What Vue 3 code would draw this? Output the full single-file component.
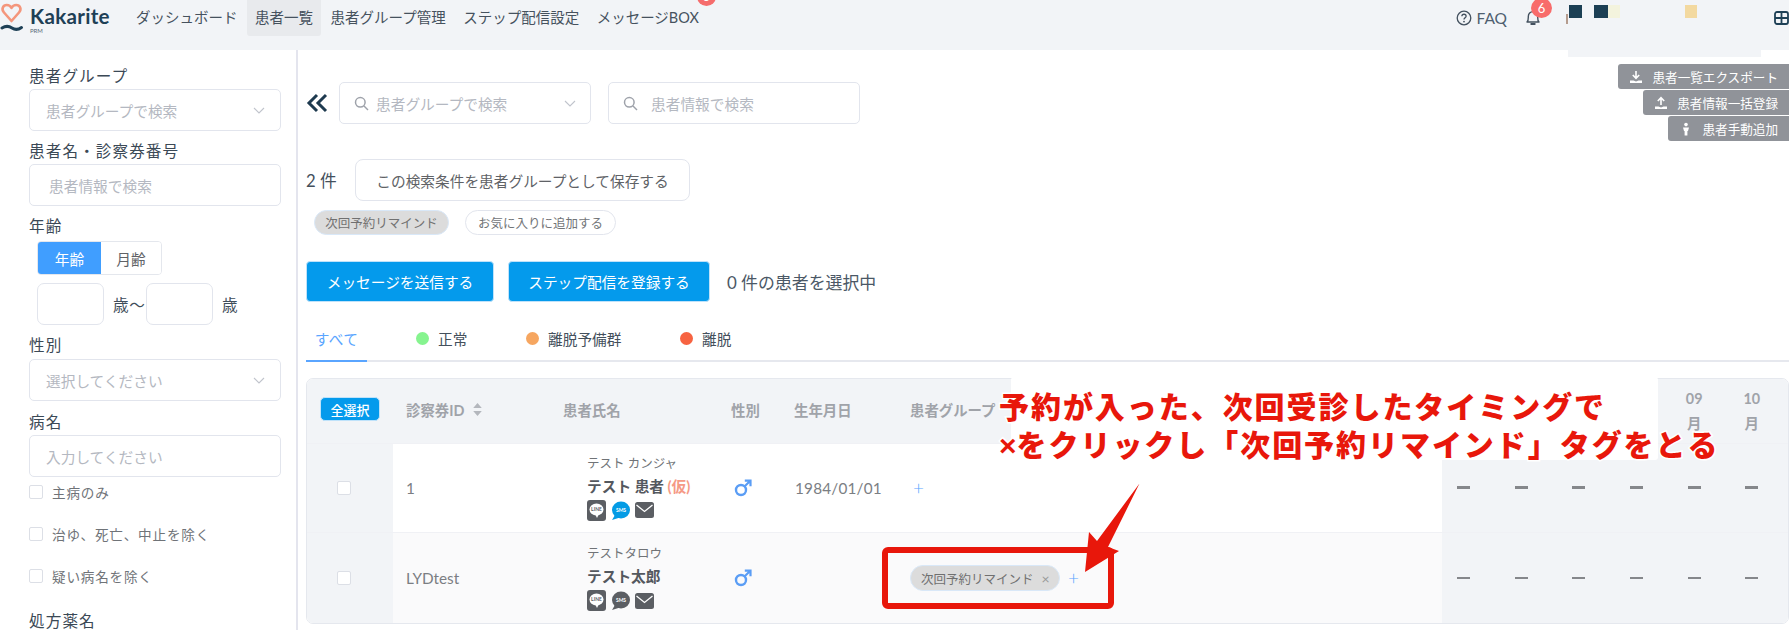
<script setup>
const navItems = [
  { label: 'ダッシュボード' },
  { label: '患者一覧', active: true },
  { label: '患者グループ管理' },
  { label: 'ステップ配信設定' },
  { label: 'メッセージBOX', badge: true },
]
const tabs = [
  { label: '正常', color: '#86f48f', width: 'w1' },
  { label: '離脱予備群', color: '#f6a660', width: 'w2' },
  { label: '離脱', color: '#f76341', width: 'w3' },
]
const checks = ['主病のみ', '治ゆ、死亡、中止を除く', '疑い病名を除く']
const months = [1, 2, 3, 4, 5, 6]
const rows = [
  { id: '1', kana: 'テスト カンジャ', name: 'テスト 患者', temp: true, date: '1984/01/01', tag: false, sms: true, cls: 'r1' },
  { id: 'LYDtest', kana: 'テストタロウ', name: 'テスト太郎', temp: false, date: '', tag: true, sms: false, cls: 'r2' },
]
</script>

<template>
  <div class="page">
    <header class="header">
      <div class="logo">
        <svg class="logo-mark" width="24" height="34" viewBox="0 0 24 34">
          <path d="M11.5 21 L4 12.5 C1 9 3 5 6.8 5 C9 5 10.6 6.2 11.5 8 C12.4 6.2 14 5 16.2 5 C20 5 22 9 19 12.5 Z" fill="none" stroke="#f4967c" stroke-width="2.6" stroke-linejoin="round"/>
          <path d="M2 28 C6 25.5 9 26 12 28 C15 30 18 30 21.5 27.5" fill="none" stroke="#1e4056" stroke-width="3" stroke-linecap="round"/>
        </svg>
        <div class="logo-text">
          <span class="logo-name">Kakarite</span>
          <span class="logo-sub">PRM</span>
        </div>
      </div>
      <nav class="nav">
        <a v-for="n in navItems" :key="n.label" class="nav-item" :class="{ active: n.active }">
          {{ n.label }}
          <span v-if="n.badge" class="nav-badge">6</span>
        </a>
      </nav>
      <div class="head-right">
        <svg width="16" height="16" viewBox="0 0 16 16">
          <circle cx="8" cy="8" r="6.8" fill="none" stroke="#44515f" stroke-width="1.3"/>
          <path d="M5.9 6.2 C5.9 3.6 10.1 3.6 10.1 6.2 C10.1 7.8 8 7.8 8 9.6" fill="none" stroke="#44515f" stroke-width="1.3"/>
          <circle cx="8" cy="11.6" r=".9" fill="#44515f"/>
        </svg>
        <span class="faq">FAQ</span>
        <span class="bell">
          <svg width="16" height="18" viewBox="0 0 16 18">
            <path d="M2 13 C3.5 11.5 3.3 9.5 3.3 7.5 C3.3 4.6 5.3 2.6 8 2.6 C10.7 2.6 12.7 4.6 12.7 7.5 C12.7 9.5 12.5 11.5 14 13 Z" fill="none" stroke="#44515f" stroke-width="1.4" stroke-linejoin="round"/>
            <path d="M6.2 15 H9.8" stroke="#44515f" stroke-width="1.8" stroke-linecap="round"/>
          </svg>
          <span class="bell-badge">6</span>
        </span>
        <span class="head-spacer"></span>
        <svg class="apps" width="15" height="14" viewBox="0 0 15 14">
          <rect x="1" y="1" width="13" height="12" rx="2" fill="none" stroke="#1e4056" stroke-width="1.8"/>
          <path d="M7.5 1 V13 M1 7 H14" stroke="#1e4056" stroke-width="1.8"/>
        </svg>
      </div>
    </header>

    <div class="body">
      <aside class="side">
        <div class="field">
          <div class="label">患者グループ</div>
          <div class="box select"><span class="ph">患者グループで検索</span><svg width="12" height="7" viewBox="0 0 12 7"><path d="M1 1 L6 6 L11 1" fill="none" stroke="#c0c4cc" stroke-width="1.1"/></svg></div>
        </div>
        <div class="field">
          <div class="label">患者名・診察券番号</div>
          <div class="box input-ph wide-pad"><span class="ph">患者情報で検索</span></div>
        </div>
        <div class="field age">
          <div class="label">年齢</div>
          <div class="seg"><span class="seg-on">年齢</span><span class="seg-off">月齢</span></div>
          <div class="range">
            <span class="mini"></span><span class="unit first">歳〜</span><span class="mini"></span><span class="unit">歳</span>
          </div>
        </div>
        <div class="field sex">
          <div class="label">性別</div>
          <div class="box select"><span class="ph">選択してください</span><svg width="12" height="7" viewBox="0 0 12 7"><path d="M1 1 L6 6 L11 1" fill="none" stroke="#c0c4cc" stroke-width="1.1"/></svg></div>
        </div>
        <div class="field last">
          <div class="label">病名</div>
          <div class="box input-ph"><span class="ph">入力してください</span></div>
        </div>
        <label v-for="c in checks" :key="c" class="check"><span class="cb"></span>{{ c }}</label>
        <div class="label drug">処方薬名</div>
      </aside>

      <main class="main">
        <div class="top">
          <div class="search-row">
            <svg class="dbl" width="23" height="20" viewBox="0 0 23 20"><path d="M11 2 L3 10 L11 18 M20 2 L12 10 L20 18" fill="none" stroke="#1e3a4f" stroke-width="3"/></svg>
            <div class="box s-select">
              <svg width="15" height="15" viewBox="0 0 15 15"><circle cx="6.3" cy="6.3" r="4.8" fill="none" stroke="#9ea2aa" stroke-width="1.5"/><path d="M10 10 L14 14" stroke="#9ea2aa" stroke-width="1.5"/></svg>
              <span class="ph grow">患者グループで検索</span>
              <svg width="12" height="7" viewBox="0 0 12 7"><path d="M1 1 L6 6 L11 1" fill="none" stroke="#c0c4cc" stroke-width="1.1"/></svg>
            </div>
            <div class="box s-input">
              <svg width="15" height="15" viewBox="0 0 15 15"><circle cx="6.3" cy="6.3" r="4.8" fill="none" stroke="#9ea2aa" stroke-width="1.5"/><path d="M10 10 L14 14" stroke="#9ea2aa" stroke-width="1.5"/></svg>
              <span class="ph">患者情報で検索</span>
            </div>
          </div>
          <div class="exports">
            <button class="exp">
              <svg width="14" height="14" viewBox="0 0 14 14"><path d="M7 1 V8 M3.8 5 L7 8.4 L10.2 5" fill="none" stroke="#fff" stroke-width="1.6"/><path d="M1 10.5 H4.5 L7 11.5 L9.5 10.5 H13 V13 H1 Z" fill="#fff"/></svg>
              患者一覧エクスポート
            </button>
            <button class="exp">
              <svg width="14" height="14" viewBox="0 0 14 14"><path d="M7 9 V2 M3.8 5 L7 1.6 L10.2 5" fill="none" stroke="#fff" stroke-width="1.6"/><path d="M1 10.5 H4.5 L7 11.5 L9.5 10.5 H13 V13 H1 Z" fill="#fff"/></svg>
              患者情報一括登録
            </button>
            <button class="exp">
              <svg width="14" height="14" viewBox="0 0 14 14"><circle cx="7" cy="2.6" r="1.8" fill="#fff"/><path d="M4 5.4 H10 L9 9 H8.4 V13.6 H5.6 V9 H5 Z" fill="#fff"/></svg>
              患者手動追加
            </button>
          </div>
        </div>

        <div class="count-row">
          <span class="count">2 件</span>
          <button class="save">この検索条件を患者グループとして保存する</button>
        </div>
        <div class="chips">
          <span class="chip grey">次回予約リマインド</span>
          <span class="chip outline">お気に入りに追加する</span>
        </div>
        <div class="actions">
          <button class="primary b1">メッセージを送信する</button>
          <button class="primary b2">ステップ配信を登録する</button>
          <span class="selected">0 件の患者を選択中</span>
        </div>

        <div class="tabs">
          <span class="tab on">すべて</span>
          <span v-for="t in tabs" :key="t.label" class="tab" :class="t.width">
            <i class="dot" :style="{ background: t.color }"></i>{{ t.label }}
          </span>
        </div>

        <section class="table">
          <div class="grid thead">
            <div class="c-check"><button class="all">全選択</button></div>
            <div class="c-id">診察券ID
              <svg width="11" height="15" viewBox="0 0 10 14"><path d="M5 1 L9 5.5 H1 Z M5 13 L9 8.5 H1 Z" fill="#b4b7bd"/></svg>
            </div>
            <div class="c-name head-name">患者氏名</div>
            <div class="c-gender">性別</div>
            <div class="c-date">生年月日</div>
            <div class="c-group">患者グループ</div>
            <div class="c-months">
              <div class="months">
                <span></span><span></span><span></span><span></span>
                <span class="m">09<br>月</span><span class="m">10<br>月</span>
              </div>
            </div>
          </div>

          <div v-for="r in rows" :key="r.id" class="grid trow" :class="r.cls">
            <div class="c-check grey"><span class="cb"></span></div>
            <div class="c-id cell">{{ r.id }}</div>
            <div class="c-name name-cell">
              <div class="kana">{{ r.kana }}</div>
              <div class="pname">{{ r.name }}<span v-if="r.temp" class="temp"> (仮)</span></div>
              <div class="contact">
                <svg width="19" height="21" viewBox="0 0 19 21"><rect width="19" height="21" rx="3" fill="#5b5e63"/><ellipse cx="9.5" cy="9.5" rx="7" ry="6" fill="#fff"/><path d="M8 14 L10 18 L12 14 Z" fill="#fff"/><text x="9.5" y="11.3" class="ico-t" fill="#5b5e63">LINE</text></svg>
                <svg width="19" height="19" viewBox="0 0 19 19"><ellipse cx="10" cy="9" rx="9" ry="8.4" :fill="r.sms ? '#039be5' : '#5b5e63'"/><path d="M4 14 L1 19 L9 16.5 Z" :fill="r.sms ? '#039be5' : '#5b5e63'"/><text x="10" y="11" class="ico-t" fill="#fff">SMS</text></svg>
                <svg width="19" height="16" viewBox="0 0 19 16"><rect width="19" height="16" rx="2.5" fill="#5b5e63"/><path d="M1.5 3 L9.5 9.5 L17.5 3" fill="none" stroke="#fff" stroke-width="1.3"/></svg>
              </div>
            </div>
            <div class="c-gender">
              <svg class="mars" width="18" height="18" viewBox="0 0 18 18"><circle cx="7" cy="11" r="5" fill="none" stroke="#5a9df5" stroke-width="2.4"/><path d="M10.5 7.5 L16 2 M10.8 1.6 H16.5 V7.2" fill="none" stroke="#5a9df5" stroke-width="2.2"/></svg>
            </div>
            <div class="c-date cell">{{ r.date }}</div>
            <div class="c-group group-cell">
              <span v-if="r.tag" class="chip grey tag">次回予約リマインド<em>×</em></span>
              <span class="plus">+</span>
            </div>
            <div class="c-months grey">
              <div class="months"><span v-for="m in months" :key="m" class="dash"></span></div>
            </div>
          </div>
        </section>
      </main>
    </div>

    <!-- redaction patches lying over the screenshot -->
    <div class="patch-top"></div>
    <i class="blk tick"></i>
    <i class="blk navy b-a"></i>
    <i class="blk navy b-b"></i>
    <i class="blk cream"></i>
    <i class="blk tan"></i>
    <div class="patch-table"></div>

    <!-- red annotation lying over the screenshot -->
    <div class="note">
      <p>予約が入った、次回受診したタイミングで</p>
      <p><span class="x">×</span>をクリックし「次回予約リマインド」タグをとる</p>
    </div>
    <div class="red-box"></div>
    <svg class="arrow" width="70" height="100" viewBox="1080 480 70 100">
      <polygon points="1139.5,483.5 1108,547 1119,551 1085,572 1089,532 1097,541" fill="#e8170b"/>
    </svg>
  </div>
</template>

<style>
html, body { margin: 0; background: #fff; overflow: hidden; }
</style>

<style scoped>
.page {
  position: relative;
  width: 1789px;
  height: 630px;
  overflow: hidden;
  font-family: Lato, "Noto Sans CJK JP", sans-serif;
  font-size: 14.7px;
  color: #44505c;
}
button { font-family: inherit; cursor: pointer; }

/* header */
.header { display: flex; align-items: flex-start; height: 50px; background: #f2f4f7; }
.logo { display: flex; width: 128px; flex: none; }
.logo-mark { flex: none; margin-right: 6px; }
.logo-text { display: flex; flex-direction: column; padding-top: 3px; }
.logo-name { font-family: Lato, sans-serif; font-weight: 700; font-size: 20.6px; line-height: 26px; color: #1e4056; letter-spacing: .3px; }
.logo-sub { font-size: 6px; line-height: 6px; color: #5b6b78; margin-top: -1px; }
.nav { display: flex; gap: 1.5px; font-size: 14.5px; }
.nav-item { position: relative; display: block; height: 36px; line-height: 35px; padding: 0 8px; border-radius: 0 0 3px 3px; color: #46525e; white-space: nowrap; }
.nav-item.active { background: #e8eaed; }
.nav-badge { position: absolute; right: -9px; top: -13px; width: 19px; height: 19px; border-radius: 50%; background: #f56c6c; color: #fff; font-size: 13px; line-height: 19px; text-align: center; }
.head-right { margin-left: auto; display: flex; align-items: center; height: 36px; }
.faq { margin-left: 5px; color: #4f5f70; font-size: 15.5px; }
.bell { position: relative; display: flex; margin-left: 18px; }
.bell-badge { position: absolute; left: 6px; top: -11px; width: 21px; height: 20px; border-radius: 50%; background: #f86c6b; color: #fff; font-size: 13px; line-height: 20px; text-align: center; }
.head-spacer { width: 233px; }
.apps { flex: none; }

/* body */
.body { display: flex; height: 580px; }
.side { width: 267px; flex: none; padding: 16px 0 0 29px; border-right: 2px solid #e4e5ee; }
.label { font-size: 15.6px; line-height: 20px; letter-spacing: 1.1px; color: #3b4956; margin-bottom: 3px; white-space: nowrap; }
.field { margin-bottom: 10px; width: 252px; }
.field.sex { margin-bottom: 11px; }
.field.sex .label { margin-bottom: 4px; }
.field.last { margin-bottom: 8px; }
.box { box-sizing: border-box; display: flex; align-items: center; height: 42px; background: #fff; border: 1px solid #e2e5ed; border-radius: 5px; }
.select { justify-content: space-between; padding: 0 15px 0 16px; }
.input-ph { padding: 0 16px; }
.wide-pad { padding: 0 19px; }
.ph { color: #b4b8c1; white-space: nowrap; }
.age .label { margin-bottom: 5px; }
.seg { display: flex; width: 125px; height: 34px; margin-left: 8px; box-sizing: border-box; border: 1px solid #e4e7ed; border-radius: 4px; overflow: hidden; }
.seg span { display: flex; align-items: center; justify-content: center; }
.seg-on { width: 63px; background: #409eff; color: #fff; }
.seg-off { flex: 1; background: #fff; color: #606266; }
.range { display: flex; align-items: center; margin: 8px 0 0 8px; }
.mini { box-sizing: border-box; width: 67px; height: 42px; border: 1px solid #e2e5ed; border-radius: 7px; }
.unit { font-size: 15.6px; color: #3f4d5a; margin-left: 9px; white-space: nowrap; }
.unit.first { width: 33px; letter-spacing: .6px; }
.check { display: flex; align-items: center; height: 14px; margin-bottom: 28px; font-size: 13.6px; letter-spacing: .8px; color: #6f7378; white-space: nowrap; }
.cb { box-sizing: border-box; display: block; width: 14px; height: 14px; background: #fff; border: 1px solid #dcdfe6; border-radius: 2px; flex: none; }
.check .cb { margin-right: 9px; }
.drug { margin-top: 10px; }

/* main */
.main { flex: 1; min-width: 0; padding-left: 8px; }
.top { display: flex; justify-content: space-between; align-items: flex-start; height: 109px; }
.search-row { display: flex; align-items: center; margin-top: 32px; }
.dbl { flex: none; margin-right: 10px; }
.s-select { width: 252px; padding: 0 14px; gap: 7px; }
.s-input { width: 252px; margin-left: 17px; padding: 0 14px; gap: 13px; }
.grow { flex: 1; }
.exports { display: flex; flex-direction: column; align-items: flex-end; gap: 1px; margin-top: 14px; }
.exp { display: flex; align-items: center; gap: 9px; height: 25px; padding: 0 11px 0 11px; border: 0; border-radius: 3px 0 0 3px; background: #909399; color: #fff; font-size: 12.6px; white-space: nowrap; }
.count-row { display: flex; align-items: center; }
.count { width: 49px; font-size: 16.7px; color: #44505c; }
.save { box-sizing: border-box; width: 335px; height: 42px; padding: 0; background: #fff; border: 1px solid #e2e5ed; border-radius: 8px; color: #606266; font-size: 14.7px; }
.chips { display: flex; margin: 9px 0 0 8px; gap: 16px; }
.chip { box-sizing: border-box; display: inline-flex; align-items: center; justify-content: center; height: 24.5px; border-radius: 13px; font-size: 12.5px; white-space: nowrap; }
.chip.grey { width: 135px; background: #dcdcdc; border: 1px solid #d9e8f8; color: #707070; }
.chip.outline { width: 151px; background: #fff; border: 1px solid #e2e5ed; color: #727578; }
.actions { display: flex; align-items: center; margin-top: 26px; }
.primary { box-sizing: border-box; height: 41px; padding: 0; background: #049aec; border: 1px solid #bfe2fa; border-radius: 4px; color: #fff; font-size: 14.7px; }
.b1 { width: 188px; }
.b2 { width: 202px; margin-left: 14px; }
.selected { margin-left: 17px; font-size: 16.9px; color: #4b5866; }

.tabs { display: flex; margin-top: 19px; height: 39px; border-bottom: 2px solid #e6e8ee; }
.tab { position: relative; display: flex; align-items: center; height: 36px; padding-bottom: 3px; color: #44505c; white-space: nowrap; }
.tab.on { width: 61px; justify-content: center; color: #5aa5ff; letter-spacing: .4px; }
.tab.on::after { content: ""; position: absolute; left: 0; right: 0; bottom: -2px; height: 2px; background: #5aa5ff; }
.w1 { margin-left: 49px; width: 110px; }
.w2 { width: 154px; }
.w3 { width: 60px; }
.dot { display: block; width: 13px; height: 13px; border-radius: 50%; margin-right: 9px; }

/* table */
.table { box-sizing: border-box; width: 1483px; height: 246px; margin-top: 16px; border: 1px solid #e5e8ee; border-radius: 7px; overflow: hidden; }
.grid { display: grid; grid-template-columns: 86px 157px 172px 63px 113px 544px 346px; }
.thead { height: 64px; background: #f2f4f7; font-weight: 700; font-size: 14.4px; color: #a0a3a9; align-items: center; }
.thead > div { padding-bottom: 3px; }
.c-check { display: flex; align-items: center; justify-content: center; }
.all { width: 60px; height: 24.5px; padding: 0; background: #049aec; border: 1px solid #bfe2fa; border-radius: 5px; color: #fff; font-size: 13px; font-weight: 500; }
.thead .c-id { padding-left: 13px; display: flex; align-items: center; gap: 8px; }
.head-name { padding-left: 13px; }
.thead .c-gender { padding-left: 9px; }
.thead .c-date { padding-left: 9px; }
.thead .c-group { padding-left: 12px; }
.thead .c-months { align-self: stretch; padding-bottom: 0; }
.months { display: grid; grid-template-columns: repeat(6, 57.6px); margin-left: -7px; justify-items: center; align-items: center; height: 100%; }
.m { font-size: 14.4px; line-height: 25px; font-weight: 700; color: #a0a3a9; text-align: center; }
.trow { background: #fff; border-top: 1px solid #f0f1f5; }
.r1 { height: 88px; }
.r2 { height: 91px; background: #fafafb; }
.trow > div { display: flex; align-items: center; }
.grey { background: #f2f4f7; }
.trow .c-check { padding-right: 13px; box-sizing: border-box; }
.cell { padding-left: 13px; color: #7b7e83; font-size: 15.3px; }
.c-date.cell { padding-left: 10px; letter-spacing: .2px; }
.trow .name-cell { display: flex; flex-direction: column; align-items: flex-start; justify-content: center; padding-left: 37px; }
.kana { font-size: 12.5px; line-height: 17px; color: #707377; }
.pname { font-size: 14.7px; line-height: 28px; font-weight: 700; color: #54585e; white-space: pre; }
.temp { color: #f59a86; }
.contact { display: flex; align-items: center; gap: 5px; height: 21px; }
.ico-t { font-size: 5px; font-weight: 700; text-anchor: middle; font-family: Lato, sans-serif; }
.trow .c-gender { padding-left: 12px; }
.mars { display: block; }
.trow .group-cell { padding-left: 12px; }
.chip.tag { width: 150px; height: 26px; justify-content: flex-start; padding-left: 10px; }
.tag em { margin-left: 8px; font-style: normal; font-size: 14px; color: #999; }
.plus { color: #5aa5ff; font-size: 19px; line-height: 20px; margin-left: 8px; font-weight: 300; }
.r1 .plus { margin-left: 0; padding-left: 3px; }
.dash { display: block; width: 13px; height: 2.5px; background: #85878b; }

/* overlays */
.patch-top { position: absolute; left: 1568px; top: 0; width: 193px; height: 57px; background: #f2f4f7; }
.blk { position: absolute; top: 5px; height: 13px; }
.tick { left: 1566px; top: 14px; width: 2px; height: 10px; background: #b59c8e; }
.navy { background: #1c3f54; }
.b-a { left: 1569px; width: 13px; }
.b-b { left: 1594px; width: 14px; }
.cream { left: 1608px; width: 12px; background: #f3f3dd; }
.tan { left: 1685px; width: 12px; background: #f3d9a0; }
.patch-table { position: absolute; left: 1011px; top: 377px; width: 647px; height: 83px; background: #fff; border-radius: 3px; }
.note { position: absolute; left: 999px; top: 387px; font-weight: 900; font-size: 30px; line-height: 37.5px; letter-spacing: 1.95px; color: #e8170b; white-space: nowrap; -webkit-text-stroke: 3px #fff; paint-order: stroke fill; font-family: "Noto Sans CJK JP", sans-serif; }
.note p { margin: 0; }
.x { font-family: "Liberation Sans", sans-serif; font-weight: 700; letter-spacing: 0; }
.red-box { position: absolute; left: 882px; top: 547px; box-sizing: border-box; width: 232px; height: 62px; border: 6px solid #e8170b; border-radius: 6px; }
.arrow { position: absolute; left: 1080px; top: 480px; }
</style>
